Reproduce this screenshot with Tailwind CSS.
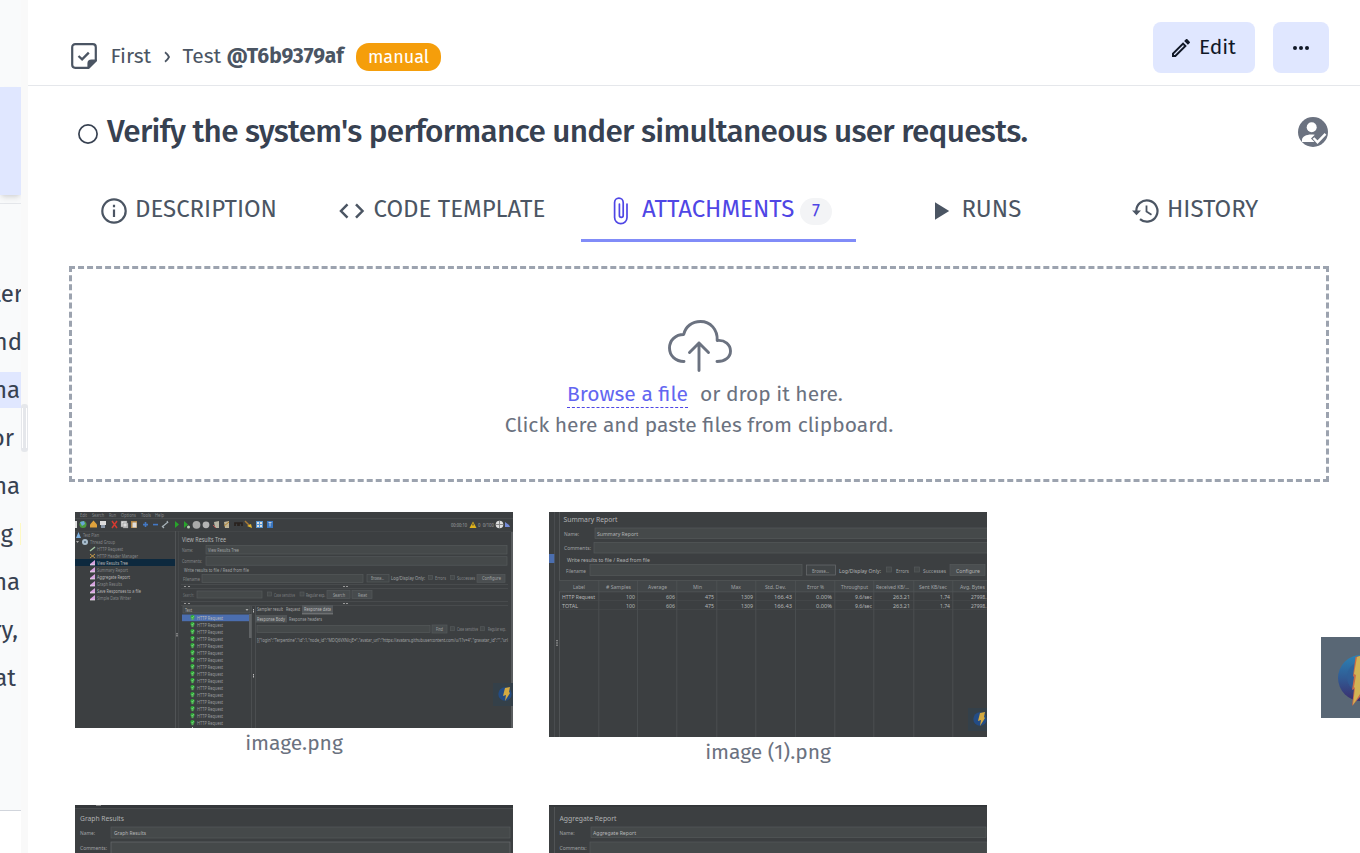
<!DOCTYPE html>
<html lang="en">
<head>
<meta charset="utf-8">
<title>Test attachments</title>
<script src="https://cdn.jsdelivr.net/npm/@tailwindcss/browser@4"></script>
</head>
<body class="flex h-[853px] w-[1360px] overflow-hidden bg-white font-['Fira_Sans','Noto_Sans',sans-serif] text-[#4b5563]">

<!-- Sidebar -->
<aside class="flex h-full w-[21px] shrink-0 flex-col overflow-hidden bg-white text-2xl text-[#374151]">
  <div class="h-[87px] shrink-0 bg-gray-50"></div>
  <div class="z-10 h-[108px] shrink-0 bg-indigo-100 shadow-md"></div>
  <div class="h-[9px] shrink-0 border-b border-gray-200 bg-gray-50"></div>
  <div class="flex h-[607px] shrink-0 flex-col border-b border-gray-300 bg-gray-50 pt-[72px] leading-9">
    <div class="mb-3 flex h-9 shrink-0 justify-end"><span class="-mr-[2px]">ter</span></div>
    <div class="mb-3 flex h-9 shrink-0 justify-end"><span class="-mr-px">nd</span></div>
    <div class="mb-3 flex h-9 shrink-0 justify-end bg-indigo-100"><span class="mr-px">na</span></div>
    <div class="mb-3 flex h-9 shrink-0 justify-end"><span class="mr-[7px]">or</span></div>
    <div class="mb-3 flex h-9 shrink-0 justify-end"><span class="mr-px">na</span></div>
    <div class="mb-3 flex h-9 shrink-0 items-center justify-end"><span class="mr-[7px]">g</span><i class="h-[22px] w-px bg-yellow-100"></i></div>
    <div class="mb-3 flex h-9 shrink-0 justify-end"><span class="mr-px">na</span></div>
    <div class="mb-3 flex h-9 shrink-0 justify-end"><span class="mr-[3px]">ry,</span></div>
    <div class="mb-3 flex h-9 shrink-0 justify-end"><span class="mr-[5px]">at</span></div>
  </div>
</aside>
<div class="flex h-full w-[7px] shrink-0 items-start bg-[#f9f9f9] pt-[387px]">
  <div class="mt-[17px] flex h-12 w-[7px] justify-center gap-[3px] rounded-[3px] bg-gray-200 py-[4px]"><i class="w-px bg-white"></i><i class="w-px bg-white"></i></div>
</div>

<main class="flex min-w-0 flex-1 flex-col">
  <header class="flex h-[86px] shrink-0 border-b border-gray-200 pl-[43px] text-[21px] leading-7 whitespace-nowrap">
    <svg class="mt-[43px] size-[26px] shrink-0" viewBox="0 0 26 26" fill="none" stroke="#4b5563" stroke-width="2.2" stroke-linejoin="round"><path d="M17.5 24.8H4.2a3 3 0 0 1-3-3V4.2a3 3 0 0 1 3-3h17.6a3 3 0 0 1 3 3v13.3z"/><path d="M17.5 24.8v-4.3a3 3 0 0 1 3-3h4.3z" fill="#4b5563"/><path d="M7.5 13l3.6 3.4 6.700-6.800" stroke-linejoin="miter" stroke-width="2.300"/></svg>
    <span class="ml-[13.500px] mt-[42px] w-[41px]">First</span>
    <svg class="ml-[12.500px] mt-[51px] h-3 w-[7px]" viewBox="0 0 7 12" fill="none" stroke="#4b5563" stroke-width="1.8"><path d="M1 1.2Q3.5 3 5 6 3.5 9 1 10.8"/></svg>
    <span class="ml-[11.500px] mt-[42px] w-[38px]">Test</span>
    <span class="ml-[6px] mt-[42px] w-[117.500px] font-bold">@T6b9379af</span>
    <span class="ml-3 mt-[43px] flex h-7 w-[85px] items-center justify-center rounded-[13px] bg-[#f59e0b] text-lg text-white"><span class="-mt-px">manual</span></span>
    <div class="ml-auto mr-[31px] mt-[22px] flex gap-[18px] text-gray-900">
      <button class="flex h-[51px] w-[102px] items-center rounded-lg bg-indigo-100 pl-[16px]"><svg class="size-6 shrink-0" viewBox="0 0 24 24" fill="#111827"><path d="M14.06 9.02l.92.92L5.92 19H5v-.92l9.06-9.06M17.66 3c-.25 0-.51.1-.7.29l-1.83 1.83 3.75 3.75 1.83-1.83a.996.996 0 0 0 0-1.41l-2.34-2.34c-.2-.2-.45-.29-.71-.29zm-3.6 3.19L3 17.25V21h3.75L17.81 9.94l-3.75-3.75z"/></svg><span class="-mt-[2px] ml-[6px]">Edit</span></button>
      <button class="flex h-[51px] w-14 items-center justify-center rounded-lg bg-indigo-100"><svg class="h-1 w-4" viewBox="0 0 16 4" fill="#111827"><circle cx="2" cy="2" r="2"/><circle cx="8" cy="2" r="2"/><circle cx="14" cy="2" r="2"/></svg></button>
    </div>
  </header>

  <section class="flex h-[92px] shrink-0 pl-[50px] text-[#374151]">
    <svg class="mt-[38px] size-5 shrink-0" viewBox="0 0 20 20" fill="none" stroke="#374151" stroke-width="1.7"><circle cx="10" cy="10" r="9.1"/></svg>
    <h1 class="ml-[9px] mt-[26px] text-[31.5px] font-medium leading-10 tracking-[-0.69px] whitespace-nowrap">Verify the system's performance under simultaneous user requests.</h1>
    <svg class="ml-auto mr-8 mt-[31px] size-[30px]" viewBox="0 0 30 30"><circle cx="15" cy="15" r="15" fill="#6b7280"/><circle cx="13.7" cy="10.2" r="5" fill="#fff"/><path d="M4 25v-2.2c0-3.3 4.300-5.400 9.200-5.400 1.200 0 2.500.1 3.600.4L13 21.500l3.500 3.500z" fill="#fff"/><path d="M15.500 21l4 4.200 8-8.300" fill="none" stroke="#fff" stroke-width="2.400"/></svg>
  </section>

  <nav class="flex h-16 shrink-0 pl-[41px] text-2xl leading-8 whitespace-nowrap">
    <div class="flex w-[239px] pl-8 pt-[15px]">
      <svg class="mt-[5px] size-[26px] shrink-0" viewBox="0 0 26 26" fill="none" stroke="#4b5563" stroke-width="2.200"><circle cx="13" cy="13" r="11.700"/><path d="M13 11.500V19M13 6.700v2.600"/></svg>
      <span class="ml-2">DESCRIPTION</span>
    </div>
    <div class="flex w-[273px] pl-[31px] pt-[15px]">
      <svg class="mt-[10px] h-4 w-[26px] shrink-0" viewBox="0 0 26 16" fill="none" stroke="#4b5563" stroke-width="2.500"><path d="M8.500 1.300L2 8l6.500 6.700M17 1.300L23.500 8 17 14.700"/></svg>
      <span class="ml-[8.500px]">CODE TEMPLATE</span>
    </div>
    <div class="flex w-[275px] border-b-[3px] border-[#818cf8] pl-8 pt-[15px] text-[#4f46e5]">
      <svg class="mt-[4px] h-7 w-4 shrink-0" viewBox="0 0 16 28" fill="none" stroke="#4f46e5" stroke-width="1.700" stroke-linecap="round"><path d="M14 7v13.500a6.200 6.200 0 0 1-12.400 0V5.500a4.300 4.300 0 0 1 8.600 0v13a1.900 1.900 0 0 1-3.800 0V7"/></svg>
      <span class="ml-[13px] w-[152px]">ATTACHMENTS</span>
      <span class="ml-[6px] mt-[5px] flex h-[27px] w-8 items-center justify-center rounded-full bg-gray-100 text-lg"><span class="-mt-0.5">7</span></span>
    </div>
    <div class="flex w-[242px] pl-[78px] pt-[15px]">
      <svg class="mt-[9px] h-[18px] w-4" viewBox="0 0 16 18" fill="#4b5563"><path d="M1 .3L15.200 9 1 17.700z"/></svg>
      <span class="ml-[11.500px]">RUNS</span>
    </div>
    <div class="flex pl-[34px] pt-[15px]">
      <svg class="mt-[6px] h-6 w-[27px]" viewBox="0 0 27 24" fill="none" stroke="#4b5563" stroke-width="2.200"><path d="M4.300 12.500A10.600 10.600 0 1 1 8 20.100"/><path d="M0 11.500h9l-4.500 4.800z" fill="#4b5563" stroke="none"/><path d="M14.500 6.500v6l5 3.200" stroke-width="1.800"/></svg>
      <span class="ml-2">HISTORY</span>
    </div>
  </nav>

  <section class="ml-[41px] mt-6 flex h-[216px] w-[1260px] shrink-0 flex-col items-center border-[3px] border-dashed border-[#9ca3af] pt-[50px] text-[21px] text-[#6b7280] whitespace-nowrap">
    <svg class="ml-[2px] h-[54px] w-16 shrink-0" viewBox="0 0 64 54" fill="none" stroke="#6b7280" stroke-width="2.900" stroke-linecap="round" stroke-linejoin="round"><path d="M16 42.500C7.500 42.500 1.500 36.700 1.500 29S7.500 15.500 15.700 15.500C17.500 7.500 24 2.500 32.500 2.500 42.500 2.500 49.700 10.500 49.200 21.500 57 20.700 62.500 25.700 62.500 32S57 42.500 49 42.500M31 51.500V24M21.500 33.500L31 24l9.500 9.500"/></svg>
    <div class="ml-3 mt-[3px] flex h-8 w-[276px] shrink-0 leading-[26px]"><span class="flex h-8 w-[121px] shrink-0 border-b border-dashed border-[#4f46e5] pt-[5px] text-[#6366f1]">Browse a file</span><span class="ml-3 mt-[5px]">or drop it here.</span></div>
    <div class="mt-1 leading-[26px]">Click here and paste files from clipboard.</div>
  </section>

  <section class="ml-[47px] mt-[30px] grid grid-cols-[438px_438px] gap-x-9 text-[21px] leading-[30px] text-[#6b7280]">
    <figure class="flex h-[293px] flex-col items-center"><svg id="tree" class="block h-[216px] w-[438px] shrink-0 bg-[#3c3f41]" viewBox="0 0 438 216"></svg><figcaption>image.png</figcaption></figure>
    <figure class="flex h-[293px] flex-col items-center"><svg id="summary" class="block h-[225px] w-[438px] shrink-0 bg-[#3c3f41]" viewBox="0 0 438 225"></svg><figcaption>image (1).png</figcaption></figure>
    <svg id="graph" class="block h-12 w-[438px] bg-[#3c3f41]" viewBox="0 0 438 48"></svg>
    <svg id="aggregate" class="block h-12 w-[438px] bg-[#3c3f41]" viewBox="0 0 438 48"></svg>
  </section>
</main>

<!-- Floating helper -->
<div class="absolute right-0 top-[637px] h-[81px] w-[39px] overflow-hidden bg-[#596775]">
  <svg class="h-[81px] w-[39px]" viewBox="0 0 39 81"><defs><linearGradient id="orb" x1="0" y1="0" x2="0" y2="1"><stop offset="0" stop-color="#2b82b5"/><stop offset=".5" stop-color="#315b94"/><stop offset="1" stop-color="#3b2c6c"/></linearGradient></defs><circle cx="40" cy="41" r="23" fill="url(#orb)"/><circle cx="42" cy="40" r="16" fill="#315f98" opacity=".6"/><path d="M34.500 20l4.500-1v41l-8 9 2-17-2 1 2-13-1-1z" fill="#c96b48"/><path d="M36 20l3-1v38l-7 11 2-17-1-1 2-12-2-1z" fill="#d1b354"/></svg>
</div>

<script>
// Thumbnail drawing
function pen(id) {
  const svg = document.getElementById(id);
  let out = '';
  return {
    r(x, y, w, h, fill, stroke) { out += `<rect x="${x}" y="${y}" width="${w}" height="${h}" fill="${fill}"${stroke ? ` stroke="${stroke}" stroke-width=".7"` : ''}/>`; },
    t(x, y, s, w, size = 5.2, fill = '#a0a3a5') { out += `<text x="${x}" y="${y}" font-family="Noto Sans, sans-serif" font-size="${size}" fill="${fill}" textLength="${w}" lengthAdjust="spacingAndGlyphs">${s}</text>`; },
    raw(s) { out += s; },
    done() { svg.innerHTML = out; }
  };
}
const F = '#45494a', L = '#55595b', D = '#85888a';

let p = pen('tree');
p.r(0, 6.500, 438, .6, L); p.r(0, 19, 438, .6, '#484c4e');
[['Edit', 5, 7], ['Search', 17, 12], ['Run', 34, 7], ['Options', 46, 15], ['Tools', 66, 10], ['Help', 80, 9]].forEach(a => p.t(a[1], 5.200, a[0], a[2], 4.800, D));
p.r(0, 9, 2, 7, '#ddd');
p.raw('<circle cx="8" cy="12.500" r="3.500" fill="#4c9a3f"/><path d="M5 10l4-1 1 3-3 2z" fill="#6aa6d8"/><path d="M15 15.500v-3l3.500-4 3.500 4v3z" fill="#dfa23c"/><path d="M25 9h6v4h-6z" fill="#ddd"/><path d="M26 13h4v3h-4z" fill="#8b98a8"/><path d="M37 9l5 7M42 9l-5 7" stroke="#d33a31" stroke-width="1.500"/><path d="M46 9h6v6h-6zM48 11h5v5h-5z" fill="#ddd" stroke="#777" stroke-width=".5"/><path d="M56 9h6v7h-6z" fill="#b38646"/><path d="M57.500 10.500h4v5h-4z" fill="#ddd"/><path d="M68 12.600h5M70.500 10v5" stroke="#4378c4" stroke-width="1.600"/><path d="M78 12.600h5" stroke="#4378c4" stroke-width="1.600"/><path d="M87 15l6-5M89 16l-2-2M93 11l-1-2" stroke="#a7b1b8" stroke-width="1.200"/><path d="M100 9l4 3.500-4 3.500z" fill="#28a32b"/><path d="M109 9l4 3.500-4 3.500z" fill="#28a32b"/><circle cx="113.500" cy="15" r="1.500" fill="#b8d0b4"/><circle cx="121.500" cy="12.800" r="3.900" fill="#aaa"/><circle cx="131" cy="12.800" r="3.400" fill="#b4b4b4"/><path d="M139 10l5-1v7h-4z" fill="#b7b4a3"/><path d="M138 13l3 3" stroke="#b55"/><path d="M149 10l5-1v7h-4z" fill="#c0b494"/><path d="M149 14l5-4" stroke="#b08030"/><path d="M160 14v-3h3v3M164 14v-3h3v3" stroke="#29221e" stroke-width="1.700" fill="none"/><path d="M170 9l5 5" stroke="#a77935" stroke-width="1.500"/><path d="M172 14l4-2 1 4z" fill="#e4b730"/><path d="M181 9h7v7h-7z" fill="#5593cf"/><path d="M182 10h2v2h-2zM185 10h2v2h-2zM182 13h2v2h-2zM185 13h2v2h-2z" fill="#ddd"/><path d="M192 9h6v7h-6z" fill="#3976c0"/><path d="M193.500 10.500h3M195 10.500v4" stroke="#ddd" stroke-width=".8"/>');
p.t(376, 15, '00:00:10', 16, 4.800); p.t(403, 15, '0&#160; 0/100', 16, 4.800);
p.raw('<path d="M398 9.500l3.500 6.500h-7z" fill="#e0b31c"/><path d="M398 11.500v2" stroke="#333"/><circle cx="424.500" cy="12.500" r="3.800" fill="#ddd"/><path d="M421 12.500h7M424.500 9v7" stroke="#888"/><path d="M430 10l4 3 1 2h-5z" fill="#758cd8"/>');
p.raw('<path d="M3.500 20l2.500 6H1z" fill="#7cb0df"/><circle cx="10" cy="30" r="3" fill="#a9bccb"/><circle cx="10" cy="30" r="1" fill="#4f6679"/><path d="M1 29h3l-1.500 2z" fill="#aaa"/><path d="M15 39l5-4" stroke="#a5c8a5" stroke-width="1.400"/><path d="M15 42l5 4M20 42l-5 4" stroke="#c49b4c" stroke-width="1"/>');
p.t(8, 24.800, 'Test Plan', 16, 4.800, D); p.t(15, 31.800, 'Thread Group', 25, 4.800, D);
p.r(0, 47, 100, 7, '#0d293e');
[['HTTP Request', 26], ['HTTP Header Manager', 41], ['View Results Tree', 31], ['Summary Report', 31], ['Aggregate Report', 33], ['Graph Results', 25], ['Save Responses to a file', 44], ['Simple Data Writer', 34]].forEach((a, i) => {
  const y = 39 + i * 7;
  p.t(22, y, a[0], a[1], 4.900, i == 2 || i == 4 || i == 6 ? '#b5b5b5' : D);
  if (i > 1) p.raw(`<path d="M15 ${y - 1}l5-4v5h-5z" fill="#d7a2df"/><path d="M15 ${y}h5" stroke="#eee" stroke-width=".7"/>`);
});
p.r(100, 19, .8, 197, L); p.r(103, 19, .6, 197, '#4b4f51');
p.t(107, 29.500, 'View Results Tree', 44, 6.200, '#b0b2b3');
p.t(107, 40, 'Name:', 11, 4.800, D); p.r(131, 33.500, 301, 8.500, F, L); p.t(133, 40, 'View Results Tree', 31, 4.800);
p.t(107, 51.200, 'Comments:', 20, 4.800, D); p.r(131, 44.700, 301, 8.500, F, L);
p.t(109, 60.200, 'Write results to file / Read from file', 65, 4.900);
p.t(108, 68.500, 'Filename', 17, 4.800, D); p.r(127, 62.500, 161, 8, F, L);
p.r(292, 62.500, 22, 7.500, '#414547', L); p.t(296, 68, 'Browse...', 13, 4.600);
p.t(316, 68.300, 'Log/Display Only:', 34, 4.900); p.r(353.500, 63.500, 4, 4, F, L); p.t(360, 68.300, 'Errors', 11, 4.700, D); p.r(375.500, 63.500, 4, 4, F, L); p.t(382, 68.300, 'Successes', 18, 4.700, D);
p.r(402, 62.300, 28, 8, '#4a4e50', L); p.t(407, 68, 'Configure', 19, 4.900);
p.r(106, 72, 327, .5, L); p.r(106, 76.500, 327, .5, L);
[74, 91].forEach(y => [109, 113, 268, 271].forEach(x => p.r(x, y, 2, 1, '#999')));
p.t(108, 84.500, 'Search:', 11, 4.600, '#717476'); p.r(122, 79, 65, 7, F, L); p.r(192.500, 80, 4, 4, F, L); p.t(199, 84.500, 'Case sensitive', 21, 4.600, '#797c7e'); p.r(225, 80, 4, 4, F, L); p.t(231, 84.500, 'Regular exp.', 19, 4.600, D);
p.r(252, 78.500, 23, 8, '#474b4d', L); p.t(258, 84.500, 'Search', 12, 4.600); p.r(277, 78.500, 20, 8, '#474b4d', L); p.t(283, 84.500, 'Reset', 9, 4.600);
p.r(106, 89, 327, .5, L); p.r(106, 93, 327, .5, L);
p.r(108, 94, 67, 7, F, L); p.t(110, 99.500, 'Text', 7, 4.600, '#b0b0b0'); p.raw('<path d="M170.500 97h3l-1.500 2z" fill="#aaa"/>');
p.r(107, 102.500, 67, 6.700, '#4b6eaf');
for (let i = 0; i < 16; i++) {
  const y = 106 + i * 7;
  p.raw(`<circle cx="117.500" cy="${y - 1}" r="2.100" fill="#2fae38"/><path d="M117.500 ${y}v2.200" stroke="#55b359" stroke-width="2"/><path d="M116.500 ${y - 1}l1 1 1.500-2" stroke="#d5efd5" stroke-width=".4" fill="none"/>`);
  p.t(122, y + 1.800, 'HTTP Request', 26, 4.900, i ? '#989b9d' : '#bbb');
}
p.r(117, 215, 1, 1, '#bbb');
p.r(174, 102, 3, 24, '#606365'); p.r(176, 94, .6, 122, L); p.r(180, 94, .6, 122, L);
[[101.500, 121], [178, 97], [178, 162]].forEach(a => { p.r(a[0], a[1], 1, 1.500, '#bbb'); p.r(a[0], a[1] + 2, 1, 1.500, '#bbb'); });
p.t(182, 99.300, 'Sampler result', 26, 4.700, '#aaa'); p.t(211, 99.300, 'Request', 14, 4.700, '#aaa');
p.r(227, 93, 31, 9, '#53575a'); p.t(229, 99.300, 'Response data', 27, 4.700, '#bbb'); p.r(227, 101.500, 31, .8, '#888');
p.r(180, 103, 32, 7.500, '#505456'); p.t(182, 108.900, 'Response Body', 28, 4.700, '#bbb'); p.t(214, 108.900, 'Response headers', 33, 4.700);
p.r(182, 113.500, 173, 7, F, L); p.r(357, 113, 15, 8, '#484c4e', L); p.t(361, 118.800, 'Find', 7, 4.600); p.r(375.500, 114.700, 4, 4, F, L); p.t(382, 118.800, 'Case sensitive', 21, 4.600, D); p.r(405.500, 114.700, 4, 4, F, L); p.t(413, 118.800, 'Regular exp.', 18, 4.600, D);
p.t(182, 129.500, '[{"login":"Terpentine","id":1,"node_id":"MDQ6VXNlcjE=","avatar_url":"https://avatars.githubusercontent.com/u/1?v=4","gravatar_id":"","url', 251, 4.800);
p.r(436, 20, 2, 196, '#595c5e');
const bolt = (x, y) => p.raw(`<rect x="${x - 12}" y="${y - 11}" width="22" height="23" fill="#344049"/><circle cx="${x}" cy="${y}" r="6.700" fill="#234c85"/><path d="M${x} ${y - 6}l5-1-1 5 1 1-5 8 1-6-3 1z" fill="#d4aa42"/>`);
bolt(430, 182);
p.done();

p = pen('summary');
p.r(5, 0, .8, 225, '#4d5153'); p.r(10, 0, .8, 225, L); p.r(0, 42, 5.300, 9, '#4b6eaf');
p.t(14.500, 10, 'Summary Report', 54, 6.600, '#b2b4b5');
p.t(15, 23.700, 'Name:', 15, 5.300); p.r(46, 16, 394, 10.500, F, L); p.t(48, 23.700, 'Summary Report', 41, 5.300, '#b0b2b3');
p.t(15, 38.200, 'Comments:', 27, 5.300); p.r(45, 30.500, 395, 10.500, F, L);
p.t(18, 49.700, 'Write results to file / Read from file', 83, 5.500, '#b0b2b3');
p.t(17, 60.700, 'Filename', 20, 5.400); p.r(41, 52.500, 212, 11, F, L);
p.r(257.500, 53, 29, 10, '#414547', '#6a6d6f'); p.t(263, 60.500, 'Browse...', 17, 5.100); p.t(290, 60.700, 'Log/Display Only:', 42, 5.400, '#b0b2b3');
p.r(337.500, 55, 5, 5, F, L); p.t(347, 60.500, 'Errors', 13, 5.200); p.r(365.500, 55, 5, 5, F, L); p.t(374, 60.500, 'Successes', 23, 5.200); p.r(401, 52.500, 35, 11, '#4a4e50', L); p.t(407, 60.500, 'Configure', 24, 5.500, '#b0b2b3');
const cols = [10.500, 49.500, 88, 127.500, 167.500, 206.500, 246, 285.500, 324.500, 364.500, 403.500, 442];
p.r(10, 68, 428, 11.500, '#424648'); p.r(10, 68, 428, .6, L); p.r(10, 79.500, 428, .7, L);
cols.slice(1, 11).forEach(x => p.r(x, 68, .7, 157, '#505456'));
p.r(10, 88.500, 428, .5, '#4b4f51'); p.r(10, 97.500, 428, .5, '#4b4f51');
[['Label', 24, 12], ['# Samples', 57, 25], ['Average', 99, 19], ['Min', 144, 9], ['Max', 182, 10], ['Std. Dev.', 216, 21], ['Error %', 258, 17], ['Throughput', 292, 27], ['Received KB/...', 327, 33], ['Sent KB/sec', 370, 28], ['Avg. Bytes', 411, 25]].forEach(a => p.t(a[1], 76.500, a[0], a[2], 5.200));
['HTTP Request', 'TOTAL'].forEach((name, i) => {
  const y = 86.500 + i * 9;
  p.t(13, y, name, i ? 16 : 33, 5.400, '#b5b7b8');
  [['100', 77, 9], ['606', 117, 9], ['475', 156, 9], ['1309', 192, 12], ['166.43', 225, 18], ['0.00%', 267, 16], ['9.6/sec', 306, 17], ['263.21', 344, 17], ['1.74', 391, 10], ['27998.', 422, 15.500]].forEach(a => p.t(a[1], y, a[0], a[2], 5.300, '#b5b7b8'));
});
p.r(7.500, 128, 1, 1.300, '#ccc'); p.r(7.500, 130.300, 1, 1.300, '#ccc'); p.r(7.500, 132.600, 1, 1.300, '#ccc');
bolt(431, 207);
p.done();

p = pen('graph');
p.r(0, 0, 438, 3, '#34373a'); p.r(21, 0, 5, .8, '#999'); p.r(0, 3, 438, .5, L);
p.t(5, 16, 'Graph Results', 44, 6.600, '#b0b2b3');
p.t(5, 30, 'Name:', 15, 5.200); p.r(36, 22, 399, 11, F, L); p.t(39, 30, 'Graph Results', 32, 5.200, '#b5b7b8');
p.t(5, 44.700, 'Comments:', 27, 5.200); p.r(36, 37, 399, 12, F, '#686b6d');
p.done();

p = pen('aggregate');
p.r(0, 0, 438, 1.500, '#313437'); p.r(5, 2, .8, 223, L);
p.t(10.500, 16, 'Aggregate Report', 57, 6.600, '#b0b2b3');
p.t(10.500, 29.700, 'Name:', 15, 5.200); p.r(42, 22, 395, 10.500, F, L); p.t(44, 29.700, 'Aggregate Report', 43, 5.200, '#b5b7b8');
p.t(10.500, 44.500, 'Comments:', 27, 5.200); p.r(41, 37, 397, 12, F, L);
p.done();
</script>
</body>
</html>
